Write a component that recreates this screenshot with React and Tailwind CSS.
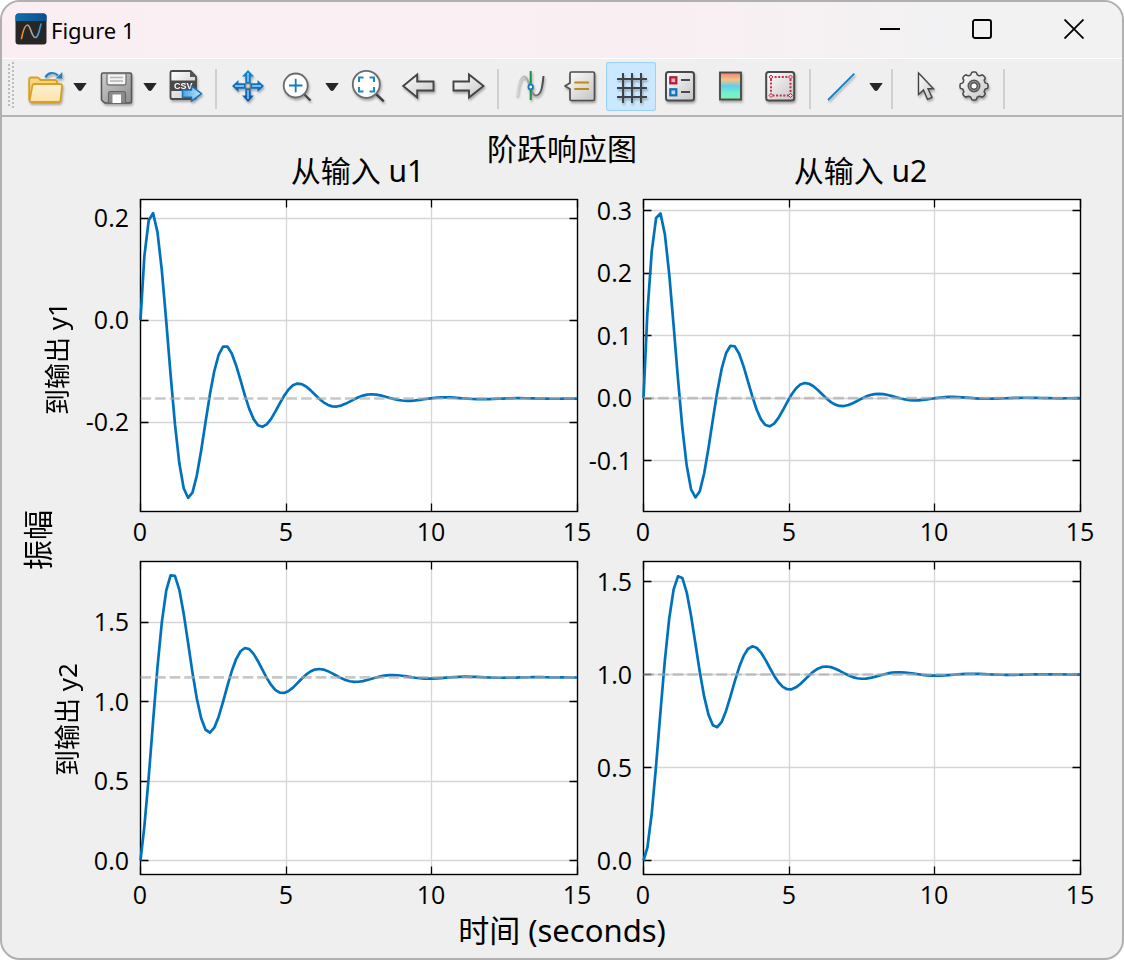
import React from "react";

const SIGMA = 0.5;
const OMEGA = 2.5;
const T_END = 15;
const DT = 0.15;

// Step responses of the four channels of (s²+s+6.5)-type dynamics.
const decaySin = (t) => Math.exp(-SIGMA * t) * Math.sin(OMEGA * t);
const secondOrder = (t) =>
  1 - Math.exp(-SIGMA * t) * (Math.cos(OMEGA * t) + 0.2 * Math.sin(OMEGA * t));

const PLOTS = [
  {
    id: "u1-y1",
    fn: (t) => 0.4 * decaySin(t) - secondOrder(t) / 6.5,
    final: -1 / 6.5,
    ticks: [0.2, 0, -0.2],
    zero: 120.6,
    scale: 510,
    height: 312,
    total: 362,
  },
  {
    id: "u2-y1",
    fn: (t) => 0.4 * decaySin(t),
    final: 0,
    ticks: [0.3, 0.2, 0.1, 0, -0.1],
    zero: 198.6,
    scale: 625,
    height: 312,
    total: 362,
  },
  {
    id: "u1-y2",
    fn: (t) => (7.5 / 6.5) * secondOrder(t) + 0.4 * decaySin(t),
    final: 7.5 / 6.5,
    ticks: [1.5, 1, 0.5, 0],
    zero: 299,
    scale: 158.7,
    height: 313,
    total: 348,
  },
  {
    id: "u2-y2",
    fn: (t) => secondOrder(t),
    final: 1,
    ticks: [1.5, 1, 0.5, 0],
    zero: 299,
    scale: 186,
    height: 313,
    total: 348,
  },
];

const LEFT = 63.5;
const TOP = 0.5;
const WIDTH = 437;

function Plot({ fn, final, ticks, zero, scale, height, total }) {
  const px = (t) => LEFT + (t / T_END) * WIDTH;
  const py = (v) => TOP + zero - v * scale;
  const snap = (v) => Math.round(v - 0.5) + 0.5;
  const count = Math.round(T_END / DT);
  const points = Array.from({ length: count + 1 }, (_, i) => {
    const t = i * DT;
    return `${(px(t) - (i ? 0.5 : 0)).toFixed(2)},${py(fn(t)).toFixed(2)}`;
  }).join(" ");
  const right = LEFT + WIDTH;
  const bottom = TOP + height;
  const xs = [0, 5, 10, 15];
  return (
    <svg
      viewBox={`0 0 503 ${total}`}
      className="block h-auto w-full overflow-visible font-['Open_Sans','Noto_Sans',sans-serif] text-[25px]"
      role="img"
      aria-label="step response"
    >
      <rect x={LEFT} y={TOP} width={WIDTH} height={height} fill="#fff" />
      <g stroke="#d6d6d6" strokeWidth="1.3">
        {[5, 10].map((t) => (
          <line key={t} x1={snap(px(t))} x2={snap(px(t))} y1={TOP} y2={bottom} />
        ))}
        {ticks.map((v) => (
          <line key={v} x1={LEFT} x2={right} y1={snap(py(v))} y2={snap(py(v))} />
        ))}
      </g>
      <rect x={LEFT} y={TOP} width={WIDTH} height={height} fill="none" stroke="#000" strokeWidth="1.4" />
      <g stroke="#000" strokeWidth="1.3">
        {xs.map((t) => (
          <path key={t} d={`M${snap(px(t))} ${TOP}v8M${snap(px(t))} ${bottom}v-8`} />
        ))}
        {ticks.map((v) => (
          <path key={v} d={`M${LEFT} ${snap(py(v))}h8M${right} ${snap(py(v))}h-8`} />
        ))}
      </g>
      <polyline points={points} fill="none" stroke="#0072bd" strokeWidth="2.7" strokeLinejoin="round" />
      <line
        x1={LEFT}
        x2={right}
        y1={py(final)}
        y2={py(final)}
        stroke="#ababab"
        strokeOpacity="0.65"
        strokeWidth="2.6"
        strokeDasharray="10.6 4"
      />
      <g fill="#000" textAnchor="end">
        {ticks.map((v) => (
          <text key={v} x="52" y={Math.round(py(v)) + 9}>
            {v.toFixed(1)}
          </text>
        ))}
      </g>
      <g fill="#000" textAnchor="middle">
        {xs.map((t) => (
          <text key={t} x={Math.floor(px(t))} y={bottom + 29}>
            {t}
          </text>
        ))}
      </g>
    </svg>
  );
}

function ToolIcon({ children }) {
  return (
    <svg
      viewBox="2 0 50 49"
      className="block h-[49px] w-[50px] drop-shadow-[1px_2px_1px_rgba(0,0,0,0.3)]"
      fill="none"
      aria-hidden="true"
    >
      {children}
    </svg>
  );
}

function Tool({ label, pressed, children }) {
  return (
    <button
      type="button"
      aria-label={label}
      aria-pressed={pressed}
      className={
        pressed
          ? "shrink-0 rounded-[3px] bg-[#cce8ff] ring-1 ring-inset ring-[#99d1ff]"
          : "shrink-0"
      }
    >
      <ToolIcon>{children}</ToolIcon>
    </button>
  );
}

function DropDown({ label }) {
  return (
    <button type="button" aria-label={label} className="h-[49px] w-5 shrink-0">
      <svg viewBox="0 0 20 49" className="block h-[49px] w-5" aria-hidden="true">
        <path d="M1.3 21h13.4L9.6 28.2q-1.6 1.6-3.2 0Z" fill="#262626" />
      </svg>
    </button>
  );
}

function Separator() {
  return <div className="mr-[7px] ml-[3px] h-10 w-0.5 shrink-0 self-center bg-[#d0d0d0]" />;
}

function gearPath(cx, cy, outer, inner, teeth) {
  const pts = [];
  const n = 90;
  for (let i = 0; i < n; i++) {
    const a = (i / n) * Math.PI * 2 - Math.PI / 2;
    const k = Math.tanh(3.2 * (Math.cos(teeth * (a + Math.PI / 2)) + 0.15));
    const r = (outer + inner) / 2 + ((outer - inner) / 2) * k;
    pts.push(`${(cx + r * Math.cos(a)).toFixed(2)} ${(cy + r * Math.sin(a)).toFixed(2)}`);
  }
  return `M${pts.join("L")}Z`;
}

function Gradients() {
  return (
    <svg className="absolute h-0 w-0" aria-hidden="true">
      <defs>
        <linearGradient id="silver" x1="0" y1="0" x2="1" y2="1">
          <stop offset="0" stopColor="#ffffff" />
          <stop offset="1" stopColor="#c4c4c4" />
        </linearGradient>
        <linearGradient id="steel" x1="0" y1="0" x2="1" y2="1">
          <stop offset="0" stopColor="#cfcfcf" />
          <stop offset="1" stopColor="#8e8e8e" />
        </linearGradient>
        <linearGradient id="folder" x1="0" y1="0" x2="0" y2="1">
          <stop offset="0" stopColor="#fdf1d4" />
          <stop offset="1" stopColor="#fae2a8" />
        </linearGradient>
        <linearGradient id="sky" x1="0" y1="0" x2="1" y2="0">
          <stop offset="0" stopColor="#4aa3e0" />
          <stop offset="1" stopColor="#c4e6fb" />
        </linearGradient>
        <linearGradient id="move" x1="0" y1="0" x2="0" y2="1">
          <stop offset="0" stopColor="#0f8ad0" />
          <stop offset="1" stopColor="#0f55a6" />
        </linearGradient>
        <linearGradient id="spectrum" x1="0" y1="0" x2="0" y2="1">
          <stop offset="0" stopColor="#ee7f78" />
          <stop offset="0.27" stopColor="#f5c583" />
          <stop offset="0.5" stopColor="#64cdee" />
          <stop offset="0.75" stopColor="#6ff0c8" />
          <stop offset="1" stopColor="#8af0b4" />
        </linearGradient>
        <linearGradient id="wave" x1="0" y1="0" x2="1" y2="0">
          <stop offset="0" stopColor="#dcdcdc" />
          <stop offset="0.5" stopColor="#9a9a9a" />
          <stop offset="1" stopColor="#4a4a4a" />
        </linearGradient>
        <linearGradient id="badge" x1="0" y1="0" x2="1" y2="0">
          <stop offset="0" stopColor="#0f6fa8" />
          <stop offset="1" stopColor="#0b4f92" />
        </linearGradient>
        <linearGradient id="trace" x1="0" y1="0" x2="1" y2="0">
          <stop offset="0" stopColor="#f08a24" />
          <stop offset="0.5" stopColor="#b9a892" />
          <stop offset="1" stopColor="#2f9be6" />
        </linearGradient>
      </defs>
    </svg>
  );
}

function TitleBar() {
  return (
    <header className="flex h-[57px] items-start border-b border-white bg-linear-to-r from-[#faeef3] via-[#f9eff2] via-60% to-[#f2f2f3] to-85%">
      <svg viewBox="0 0 32 32" className="mt-[11px] ml-[13px] h-8 w-8 shrink-0" aria-hidden="true">
        <rect x="0.5" y="0.5" width="31" height="31" rx="3" fill="#262626" />
        <path d="M0.5 8V3.5q0-3 3-3h25q3 0 3 3V8Z" fill="url(#badge)" />
        <path
          d="M6.5 25.5C8 18 9.5 12 12.5 12S16.500 24 20 24.500 24 18 26 11"
          fill="none"
          stroke="url(#trace)"
          strokeWidth="1.6"
          strokeLinecap="round"
        />
      </svg>
      <h1 className="mt-3 ml-1 grow text-[22px] leading-8">Figure 1</h1>
      <div className="mr-0.5 flex h-[54px] text-black">
        <button type="button" aria-label="最小化" className="flex w-[92px] items-center justify-center">
          <svg viewBox="0 0 20 20" className="h-5 w-5" aria-hidden="true">
            <path d="M0 10h20" stroke="currentColor" strokeWidth="2" />
          </svg>
        </button>
        <button type="button" aria-label="最大化" className="flex w-[92px] items-center justify-center">
          <svg viewBox="0 0 20 20" className="h-5 w-5" aria-hidden="true">
            <rect x="1" y="1" width="18" height="18" rx="2" fill="none" stroke="currentColor" strokeWidth="1.9" />
          </svg>
        </button>
        <button type="button" aria-label="关闭" className="flex w-[92px] items-center justify-center">
          <svg viewBox="0 0 20 20" className="h-5 w-5" aria-hidden="true">
            <path d="M0.500 0.500l19 19M19.500 0.500l-19 19" stroke="currentColor" strokeWidth="1.8" />
          </svg>
        </button>
      </div>
    </header>
  );
}

function Toolbar() {
  return (
    <div role="toolbar" className="flex h-[58px] items-start border-b-2 border-[#b4b4b4] pt-[3px]">
      <svg viewBox="0 0 6 46" className="mr-2 ml-1.5 h-[46px] w-1.5 shrink-0" aria-hidden="true">
        <path d="M1 2v44M5 0v46" stroke="#bdbdbd" strokeWidth="2" strokeDasharray="2 2" />
      </svg>

      <Tool label="打开">
        <path d="M9.200 38V17.500q0-2 2-2H17q1.500 0 2.300 1.200L20.500 18H35q1.800 0 1.800 1.800V24" fill="#f6d583" stroke="#d9a021" strokeWidth="1.8" />
        <path d="M14.500 22H40q2.200 0 2 2L40.500 38q-.2 2-2.200 2H11.500q-2 0-1.800-2L12.300 24q.3-2 2.200-2Z" fill="url(#folder)" stroke="#d9a021" strokeWidth="1.800" />
        <path d="M25.500 15.500C27.500 10.500 34 9.500 38 13.500" stroke="#2383c4" strokeWidth="2.200" />
        <path d="M42.300 10v6.500h-6.600Z" fill="#2383c4" />
      </Tool>
      <DropDown label="打开选项" />

      <Tool label="保存">
        <path d="M13 11H40q1.500 0 1.500 1.500v27q0 1.500-1.500 1.500H15l-3.500-3V12.500q0-1.500 1.500-1.500Z" fill="url(#steel)" stroke="#555" strokeWidth="1.500" />
        <path d="M17 11.500h19v9.500q0 2-2 2H19q-2 0-2-2Z" fill="#f4f4f4" stroke="#777" strokeWidth="1.300" />
        <path d="M20 15.500h13M20 19h13" stroke="#b5b5b5" strokeWidth="1.300" />
        <path d="M18.500 41v-9.500q0-2 2-2h13q2 0 2 2V41Z" fill="#8b8b8b" stroke="#666" strokeWidth="1.200" />
        <path d="M22.500 32.500h8.500V41h-8.500Z" fill="#fff" />
      </Tool>
      <DropDown label="保存选项" />

      <Tool label="导出 CSV">
        <path d="M12 9h18.500l5.500 5.500V35q0 2-2 2H12q-1.500 0-1.500-2V10.500Q10.500 9 12 9Z" fill="url(#silver)" stroke="#4a4a4a" strokeWidth="1.800" />
        <path d="M30 9v6h6.500Z" fill="#555" />
        <path d="M10.500 18.500h26v10.500h-26Z" fill="#4a4a4a" />
        <text x="14" y="27" fill="#fff" className="font-['Liberation_Sans',sans-serif] text-[9px] font-bold">
          CSV
        </text>
        <path d="M22.500 28h9v-4l10 7.600-10 7.600v-4h-9Z" fill="url(#sky)" stroke="#1473b9" strokeWidth="1.500" strokeLinejoin="round" />
      </Tool>
      <Separator />

      <Tool label="平移">
        <path
          d="M26 8l6 6.500h-3.300V21.300h6.800V18l6.500 6-6.500 6v-3.300h-6.800v6.800H32L26 40l-6-6.500h3.300v-6.800h-6.800V30L10 24l6.500-6v3.300h6.800V14.500H20Z"
          fill="url(#move)"
        />
        <path d="M26 11v9M26 28v9M13 24h9M30 24h9" stroke="#79bdf0" strokeWidth="1.800" />
        <rect x="23.800" y="21.800" width="4.400" height="4.400" fill="#d3d3d3" stroke="#777" />
      </Tool>

      <Tool label="放大">
        <path d="M32.500 32.500l6 6" stroke="#444" strokeWidth="2.200" />
        <circle cx="23.700" cy="23.500" r="12" fill="#fff" stroke="#6b6b6b" strokeWidth="1.800" />
        <path d="M17 23.500h13.400M23.700 16.800v13.400" stroke="#1878be" strokeWidth="1.800" />
      </Tool>
      <DropDown label="缩放选项" />

      <Tool label="适应窗口">
        <path d="M34 32l7.800 7.300" stroke="#3f3f3f" strokeWidth="2.400" />
        <circle cx="24.300" cy="22.300" r="13.500" fill="#fff" stroke="#6b6b6b" strokeWidth="1.800" />
        <path d="M17 20v-4.500h4.500M27.500 15.500H32V20M32 25v4.500h-4.500M21.500 29.500H17V25" stroke="#1a8ac6" strokeWidth="2" />
      </Tool>

      <Tool label="后退">
        <path d="M11.200 24l14-11.500v7h16.300v9H25.200v7Z" fill="url(#silver)" stroke="#444" strokeWidth="1.900" />
      </Tool>
      <Tool label="前进">
        <path d="M41.500 24L27 12.500v7H11.500v9H27v7Z" fill="url(#silver)" stroke="#444" strokeWidth="1.900" />
      </Tool>
      <Separator />

      <Tool label="数据光标">
        <path d="M13 34C14 24 16 14.500 20.500 14.500S26 33.500 32 33.500 38.500 22 39.500 14" stroke="url(#wave)" strokeWidth="2" />
        <path d="M26.700 9v29" stroke="#149245" strokeWidth="2" />
        <circle cx="26.700" cy="25" r="2.300" fill="#fff" stroke="#1279c4" strokeWidth="1.800" />
      </Tool>

      <Tool label="注释">
        <path d="M17.500 10H39q1.500 0 1.500 1.500V37q0 1.500-1.500 1.500H17.500q-1.500 0-1.500-1.500V27l-5-3 5-3V11.500q0-1.500 1.500-1.500Z" fill="url(#silver)" stroke="#4e4e4e" strokeWidth="1.700" strokeLinejoin="round" />
        <path d="M20.300 20.500H35M20.300 27H35" stroke="#c08a13" strokeWidth="1.900" />
      </Tool>

      <Tool label="网格" pressed>
        <path d="M19 11v30M28 11v30M37 11v30M13 17h30M13 26h30M13 35h30" stroke="#3f4347" strokeWidth="2" />
      </Tool>

      <Tool label="图例">
        <rect x="12" y="10" width="28" height="28.500" rx="2.500" fill="url(#silver)" stroke="#4a4a4a" strokeWidth="2" />
        <rect x="16.300" y="15.300" width="6" height="6" fill="#f0b5bd" stroke="#b71c3a" strokeWidth="2.300" />
        <rect x="16.300" y="27.300" width="6" height="6" fill="#b9dcf7" stroke="#1273bd" strokeWidth="2.300" />
        <path d="M27 18h9M27 30h9" stroke="#4a4a4a" strokeWidth="1.900" />
      </Tool>

      <Tool label="颜色条">
        <rect x="16" y="10.500" width="21" height="27" fill="url(#spectrum)" stroke="#4a4a4a" strokeWidth="1.900" />
      </Tool>

      <Tool label="坐标区边框">
        <rect x="12.200" y="10" width="28" height="28.500" rx="2.500" fill="url(#silver)" stroke="#4a4a4a" strokeWidth="2" />
        <rect x="17" y="15" width="19.500" height="18.500" stroke="#c62b45" strokeWidth="1.900" strokeDasharray="2 1.600" />
        <path
          d="M17 13l2 2-2 2-2-2ZM36.500 13l2 2-2 2-2-2ZM17 31.500l2 2-2 2-2-2ZM36.500 31.500l2 2-2 2-2-2Z"
          fill="#f7ccd2"
          stroke="#c62b45"
        />
      </Tool>
      <Separator />

      <Tool label="线条">
        <path d="M12 38L38.300 11.700" stroke="#1480c8" strokeWidth="1.800" />
      </Tool>
      <DropDown label="线条选项" />
      <Separator />

      <Tool label="选择">
        <path d="M20.500 11v21.500l5-4.500 4 9.300 4.500-2-4-8.600h5.500Z" fill="url(#silver)" stroke="#444" strokeWidth="1.400" />
      </Tool>

      <Tool label="设置">
        <path d={gearPath(26, 24, 14, 11.500, 8)} fill="url(#silver)" stroke="#4a4a4a" strokeWidth="1.500" strokeLinejoin="round" />
        <circle cx="26" cy="24" r="4.500" fill="#fff" stroke="#555" strokeWidth="4" />
        <circle cx="26" cy="24" r="4.500" stroke="#999" strokeWidth="1.200" />
      </Tool>
      <Separator />
    </div>
  );
}

function SideLabel({ className, children }) {
  return (
    <div className={"mr-[3px] -ml-[3px] flex items-center " + className}>
      <span className="rotate-180 text-[26px] leading-[14px] whitespace-nowrap [text-orientation:sideways] [writing-mode:vertical-rl]">
        {children}
      </span>
    </div>
  );
}

function Figure() {
  return (
    <main className="grow pt-[21px] pb-[7px] text-[30px]">
      <h2 className="text-center leading-[22px]">阶跃响应图</h2>
      <div className="flex pr-[39px] pl-[21px]">
        <div className="flex items-center pt-[11px]">
          <span className="rotate-180 leading-[30px] whitespace-nowrap [text-orientation:sideways] [writing-mode:vertical-rl]">
            振幅
          </span>
        </div>
        <div className="grid grow grid-cols-[24px_minmax(0,1fr)_minmax(0,1fr)]">
          <h3 className="col-start-2 pb-[17px] pl-[58px] text-center leading-[22px]">从输入 u1</h3>
          <h3 className="pb-[17px] pl-[58px] text-center leading-[22px]">从输入 u2</h3>
          <SideLabel className="justify-start pb-11">到输出 y1</SideLabel>
          <Plot {...PLOTS[0]} />
          <Plot {...PLOTS[1]} />
          <SideLabel className="justify-end pb-8">到输出 y2</SideLabel>
          <Plot {...PLOTS[2]} />
          <Plot {...PLOTS[3]} />
        </div>
      </div>
      <p className="text-center text-[31px] leading-[42px]">时间 (seconds)</p>
    </main>
  );
}

export default function App() {
  return (
    <div className="min-h-screen bg-white font-['Noto_Sans','Open_Sans','Noto_Sans_CJK_SC',sans-serif] text-black">
      <Gradients />
      <div className="flex min-h-screen flex-col overflow-hidden rounded-[20px] border-2 border-[#b0b0b0] bg-[#efefef]">
        <TitleBar />
        <Toolbar />
        <Figure />
      </div>
    </div>
  );
}
